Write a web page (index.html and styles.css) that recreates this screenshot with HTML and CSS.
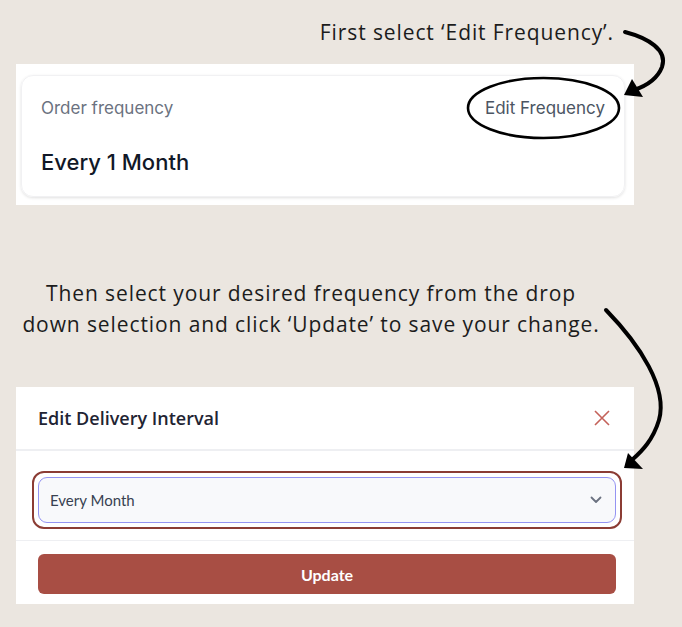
FILE: index.html
```html
<!DOCTYPE html>
<html>
<head>
<meta charset="utf-8">
<link rel="stylesheet" href="styles.css">
</head>
<body>
<div class="page">
  <p class="caption caption-top">First select ‘Edit Frequency’.</p>
  <div class="shot shot-one">
    <div class="freq-card">
      <div class="freq-row">
        <span class="freq-label">Order frequency</span>
        <span class="freq-edit">Edit Frequency</span>
      </div>
      <div class="freq-value">Every 1 Month</div>
    </div>
  </div>
  <p class="caption caption-mid">Then select your desired frequency from the drop<br>down selection and click ‘Update’ to save your change.</p>
  <div class="shot shot-two">
    <div class="modal-head">
      <span class="modal-title">Edit Delivery Interval</span>
      <svg class="close-icon" width="16" height="16" viewBox="0 0 16 16"><path d="M1 1 L15 15 M15 1 L1 15" stroke="#c4625a" stroke-width="1.6" fill="none"/></svg>
    </div>
    <div class="modal-body">
      <div class="select-ring">
        <div class="select-box">
          <span class="select-text">Every Month</span>
          <svg class="chevron" width="12" height="8" viewBox="0 0 12 8"><path d="M1.5 1.5 L6 6 L10.5 1.5" stroke="#6b7280" stroke-width="1.8" fill="none" stroke-linecap="round" stroke-linejoin="round"/></svg>
        </div>
      </div>
    </div>
    <div class="modal-foot">
      <div class="update-btn">Update</div>
    </div>
  </div>
</div>
<svg class="annotations" width="682" height="627" viewBox="0 0 682 627">
  <ellipse cx="543.5" cy="108" rx="75.5" ry="30" fill="none" stroke="#000" stroke-width="2.6"/>
  <path d="M625 32 C 648 38, 668 50, 662 67 C 657 80, 646 86, 634 90" fill="none" stroke="#000" stroke-width="4" stroke-linecap="round"/>
  <polygon points="624,95 632,79 643,97" fill="#000"/>
  <path d="M606 310 C 640 345, 668 388, 659 420 C 653 440, 642 451, 633 459" fill="none" stroke="#000" stroke-width="4" stroke-linecap="round"/>
  <polygon points="624,468 628,453 643,469" fill="#000"/>
</svg>
</body>
</html>
```
FILE: styles.css
```css
html, body {
  margin: 0;
  padding: 0;
}
body {
  background: #ebe6e0;
  width: 682px;
  height: 627px;
  position: relative;
  overflow: hidden;
}
.page {
  padding-left: 16px;
  width: 618px;
}
.caption {
  margin: 0;
  font-family: "Open Sans", Lato, sans-serif;
  font-size: 21px;
  letter-spacing: 0.9px;
  color: #1c1c1c;
}
.caption-top {
  text-align: right;
  padding-right: 20px;
  padding-top: 19px;
  height: 64px;
  line-height: 26px;
  box-sizing: border-box;
}
.shot {
  background: #fff;
  box-sizing: border-box;
}
.shot-one {
  height: 141px;
  padding: 11px 9px 8px 5px;
}
.freq-card {
  height: 122px;
  box-sizing: border-box;
  border: 1px solid #f1f1f3;
  border-radius: 12px;
  box-shadow: 0 1px 3px rgba(0,0,0,0.12);
  padding: 20px 19px 0 19px;
  font-family: Inter, "Noto Sans", sans-serif;
}
.freq-row {
  display: flex;
  justify-content: space-between;
  align-items: center;
  height: 24px;
}
.freq-label {
  font-size: 17px;
  color: #6b7280;
}
.freq-edit {
  font-size: 17px;
  color: #4b5563;
}
.freq-value {
  margin-top: 30px;
  font-size: 22px;
  font-weight: 500;
  color: #111827;
  line-height: 24px;
}
.caption-mid {
  text-align: center;
  width: 590px;
  margin-left: 0;
  padding-top: 73px;
  height: 182px;
  box-sizing: border-box;
  line-height: 31px;
}
.shot-two {
  height: 217px;
  font-family: Lato, "Open Sans", sans-serif;
}
.modal-head {
  height: 62px;
  display: flex;
  align-items: center;
  justify-content: space-between;
  padding: 0 24px 0 22px;
  border-bottom: 2px solid #eeeff2;
}
.modal-title {
  font-family: "Open Sans", Lato, sans-serif;
  font-size: 18px;
  font-weight: 600;
  color: #1f2433;
}
.close-icon {
  display: block;
}
.modal-body {
  padding: 20px 12px 11px 16px;
  border-bottom: 1px solid #eeeff2;
}
.select-ring {
  border: 2px solid #8b3c34;
  border-radius: 12px;
  padding: 4px;
}
.select-box {
  height: 46px;
  box-sizing: border-box;
  border: 1.5px solid #9494f2;
  border-radius: 9px;
  background: #f8f9fb;
  display: flex;
  align-items: center;
  justify-content: space-between;
  padding: 0 13px 0 11px;
}
.select-text {
  font-size: 15px;
  color: #374151;
}
.chevron {
  display: block;
}
.modal-foot {
  padding: 13px 18px 10px 22px;
}
.update-btn {
  height: 40px;
  border-radius: 6px;
  background: #a84e44;
  color: #fff;
  font-weight: 700;
  font-size: 16px;
  display: flex;
  align-items: center;
  justify-content: center;
}
.annotations {
  position: absolute;
  top: 0;
  left: 0;
  pointer-events: none;
}
```
